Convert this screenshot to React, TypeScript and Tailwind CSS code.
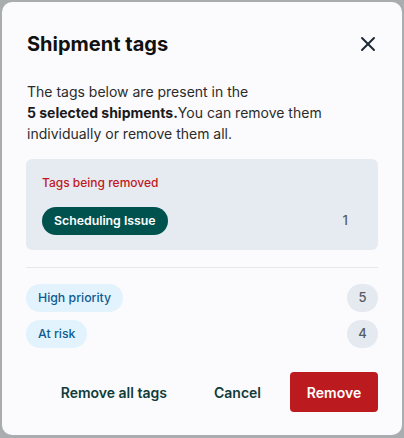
import { X } from "lucide-react";

const otherTags = [
  { name: "High priority", count: 5 },
  { name: "At risk", count: 4 },
];

export default function App() {
  return (
    <div
      className="w-[404px] h-[438px] bg-[#a9adb0] pt-[2px] pl-[2px]"
      style={{ fontFamily: "Inter, 'Noto Sans', sans-serif" }}
    >
      <div className="w-[400px] h-[433px] bg-[#fbfbfd] rounded-[10px] px-6 pt-[28px] pb-[23px] flex flex-col">
        <div className="flex items-center justify-between">
          <h1 className="text-[20px] leading-[28px] font-bold text-[#111111] pl-[1px]">Shipment tags</h1>
          <button className="text-[#1f2937] -mr-[2px]">
            <X size={24} strokeWidth={2} />
          </button>
        </div>

        <p className="mt-[23px] text-[14px] leading-[21px] text-[#2b2b2b] pl-[1px]">
          The tags below are present in the
          <br />
          <span className="font-bold text-[#1a1a1a]">5 selected shipments.</span>You can remove them individually or remove them all.
        </p>

        <div className="mt-[15px] bg-[#e5ebf1] rounded-md pl-4 pr-[30px] pt-[14px] pb-[15px]">
          <div className="text-[12px] leading-[20px] font-medium text-[#c0181d]">Tags being removed</div>
          <div className="mt-[14px] flex items-center justify-between">
            <span className="h-7 px-3 rounded-full bg-[#00524f] text-white text-[12.3px] font-semibold flex items-center">
              Scheduling Issue
            </span>
            <span className="text-[13px] text-[#555c63] font-medium">1</span>
          </div>
        </div>

        <div className="mt-[17px] border-t border-[#e4e7eb]" />

        <div className="mt-4 flex flex-col gap-2">
          {otherTags.map((t) => (
            <div key={t.name} className="flex items-center justify-between">
              <span className="h-7 px-3 rounded-full bg-[#e3f3fd] text-[#0e5c93] text-[12.3px] font-medium flex items-center">
                {t.name}
              </span>
              <span className="h-7 w-[31px] rounded-full bg-[#e5eaf0] text-[#555c63] text-[13px] font-medium flex items-center justify-center">
                {t.count}
              </span>
            </div>
          ))}
        </div>

        <div className="mt-auto flex items-center justify-end">
          <button className="h-10 px-4 text-[14px] font-semibold text-[#0f3b3a]">Remove all tags</button>
          <button className="h-10 px-4 ml-[15px] text-[14px] font-semibold text-[#0f3b3a]">Cancel</button>
          <button className="h-10 w-[88px] ml-[13px] rounded bg-[#bb1b1f] text-white text-[14px] font-semibold">
            Remove
          </button>
        </div>
      </div>
    </div>
  );
}
